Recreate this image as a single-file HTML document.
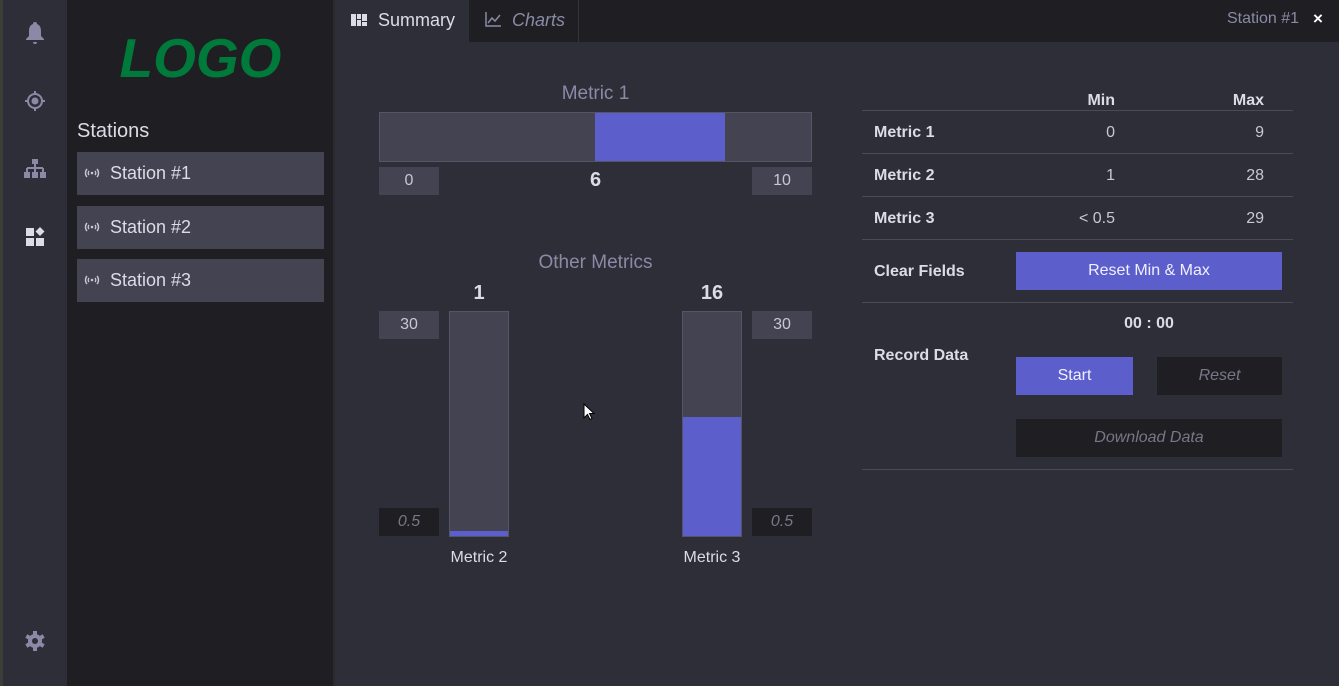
<!DOCTYPE html>
<html><head><style>
*{margin:0;padding:0;box-sizing:border-box}
body{width:1339px;height:686px;overflow:hidden;background:#2e2e38;font-family:"Liberation Sans",sans-serif;position:relative;color:#dcdce6}
.a{position:absolute}
.box{position:absolute;background:#434352;color:#c8c8d4;font-size:16px;text-align:center;line-height:28px}
.dk{background:#1f1f23;color:#777788;font-style:italic}
.st{position:absolute;left:77px;width:247px;height:43px;background:#434352;font-size:18px;color:#dcdce6;line-height:43px;padding-left:33px}
.st svg{position:absolute;left:6px;top:15px}
.line{position:absolute;left:862px;width:431px;height:1px;background:#4a4a58}
.lbl{position:absolute;left:874px;font-weight:bold;font-size:16px;color:#dcdce6}
.num{position:absolute;font-size:16px;color:#c8c8d4;text-align:right}
.btn{position:absolute;background:#5c5ecc;color:#f0f0ff;font-size:16px;text-align:center}
</style></head><body>
<div class="a" style="left:0;top:0;width:3px;height:686px;background:#3d3d38"></div>
<div class="a" style="left:3px;top:0;width:64px;height:686px;background:#2e2e38"></div>
<div class="a" style="left:67px;top:0;width:267px;height:686px;background:#1f1f23"></div>
<div class="a" style="left:333px;top:0;width:2px;height:686px;background:#2a2a30"></div>
<svg class="a" style="left:24px;top:21px" width="22" height="24" viewBox="0 0 22 24"><path d="M11 1a2 2 0 0 1 2 2c3 1 4 4 4 7v5l3 3v1H2v-1l3-3v-5c0-3 1-6 4-7a2 2 0 0 1 2-2zM9 21h4a2 2 0 0 1-4 0z" fill="#8a8aa6"/></svg>
<svg class="a" style="left:24px;top:90px" width="22" height="22" viewBox="0 0 22 22"><circle cx="11" cy="11" r="7" fill="none" stroke="#8a8aa6" stroke-width="2"/><circle cx="11" cy="11" r="3.5" fill="#8a8aa6"/><path d="M11 1v3M11 18v3M1 11h3M18 11h3" stroke="#8a8aa6" stroke-width="2"/></svg>
<svg class="a" style="left:24px;top:159px" width="22" height="20" viewBox="0 0 22 20"><rect x="8" y="0" width="6" height="5" fill="#8a8aa6"/><path d="M11 5v4M3 9h16M3 9v4M11 9v4M19 9v4" stroke="#8a8aa6" stroke-width="2" fill="none"/><rect x="0" y="13" width="6" height="6" fill="#8a8aa6"/><rect x="8" y="13" width="6" height="6" fill="#8a8aa6"/><rect x="16" y="13" width="6" height="6" fill="#8a8aa6"/></svg>
<svg class="a" style="left:25px;top:227px" width="20" height="20" viewBox="0 0 20 20"><rect x="1" y="1" width="8" height="8" fill="#dcdce6"/><rect x="1" y="11" width="8" height="8" fill="#dcdce6"/><rect x="11" y="11" width="8" height="8" fill="#dcdce6"/><path d="M15 0l4.5 4.5L15 9l-4.5-4.5z" fill="#dcdce6"/></svg>
<svg class="a" style="left:24px;top:630px" width="22" height="22" viewBox="0 0 22 22"><g fill="#8a8aa6"><circle cx="11" cy="11" r="7"/><rect x="9" y="1" width="4" height="20"/><rect x="9" y="1" width="4" height="20" transform="rotate(60 11 11)"/><rect x="9" y="1" width="4" height="20" transform="rotate(120 11 11)"/></g><circle cx="11" cy="11" r="3" fill="#2e2e38"/></svg>
<div class="a" style="left:67px;top:27px;width:267px;text-align:center;font-size:55px;font-weight:bold;font-style:italic;color:#007a3a;line-height:62px">LOGO</div>
<div class="a" style="left:77px;top:120px;font-size:20px;color:#dcdce6">Stations</div>
<div class="st" style="top:152px"><svg width="18" height="12" viewBox="0 0 18 12"><g fill="none" stroke="#c8c8d4" stroke-width="1.4"><path d="M4 2a6 6 0 0 0 0 8M14 2a6 6 0 0 1 0 8M6 4a3 3 0 0 0 0 4M12 4a3 3 0 0 1 0 4"/></g><circle cx="9" cy="6" r="1.3" fill="#c8c8d4"/></svg>Station #1</div>
<div class="st" style="top:206px"><svg width="18" height="12" viewBox="0 0 18 12"><g fill="none" stroke="#c8c8d4" stroke-width="1.4"><path d="M4 2a6 6 0 0 0 0 8M14 2a6 6 0 0 1 0 8M6 4a3 3 0 0 0 0 4M12 4a3 3 0 0 1 0 4"/></g><circle cx="9" cy="6" r="1.3" fill="#c8c8d4"/></svg>Station #2</div>
<div class="st" style="top:259px"><svg width="18" height="12" viewBox="0 0 18 12"><g fill="none" stroke="#c8c8d4" stroke-width="1.4"><path d="M4 2a6 6 0 0 0 0 8M14 2a6 6 0 0 1 0 8M6 4a3 3 0 0 0 0 4M12 4a3 3 0 0 1 0 4"/></g><circle cx="9" cy="6" r="1.3" fill="#c8c8d4"/></svg>Station #3</div>
<div class="a" style="left:335px;top:0;width:1004px;height:42px;background:#1f1f23"></div>
<div class="a" style="left:335px;top:0;width:134px;height:42px;background:#2e2e38"></div>
<div class="a" style="left:578px;top:0;width:1px;height:42px;background:#34343c"></div>
<svg class="a" style="left:351px;top:14px" width="16" height="12" viewBox="0 0 16 12"><g fill="#dcdce6"><rect x="0" y="0" width="5" height="12"/><rect x="6" y="0" width="4" height="5"/><rect x="6" y="6" width="4" height="6"/><rect x="11" y="0" width="5" height="7"/><rect x="11" y="8" width="5" height="4"/></g></svg>
<div class="a" style="left:378px;top:10px;font-size:18px;color:#dcdce6">Summary</div>
<svg class="a" style="left:485px;top:12px" width="16" height="15" viewBox="0 0 16 15"><path d="M1 0v14h15" stroke="#8a8aa6" stroke-width="1.5" fill="none"/><path d="M3 11l4-5 3 3 5-6" stroke="#8a8aa6" stroke-width="1.5" fill="none"/></svg>
<div class="a" style="left:512px;top:10px;font-size:18px;color:#8a8aa6;font-style:italic">Charts</div>
<div class="a" style="left:1227px;top:10px;font-size:16px;color:#8a8aa6">Station #1</div>
<div class="a" style="left:1313px;top:9px;font-size:17px;color:#fff;font-weight:bold">×</div>
<div class="a" style="left:379px;top:83px;width:433px;text-align:center;font-size:19px;color:#8a8aa6">Metric 1</div>
<div class="a" style="left:379px;top:112px;width:433px;height:50px;background:#434352;border:1px solid #555566"></div>
<div class="a" style="left:595px;top:113px;width:130px;height:48px;background:#5c5ecc"></div>
<div class="box" style="left:379px;top:167px;width:60px">0</div>
<div class="box" style="left:752px;top:167px;width:60px">10</div>
<div class="a" style="left:379px;top:169px;width:433px;text-align:center;font-size:20px;font-weight:bold;color:#dcdce6">6</div>
<div class="a" style="left:379px;top:252px;width:433px;text-align:center;font-size:19px;color:#8a8aa6">Other Metrics</div>
<div class="a" style="left:449px;top:282px;width:60px;text-align:center;font-size:20px;font-weight:bold">1</div>
<div class="a" style="left:682px;top:282px;width:60px;text-align:center;font-size:20px;font-weight:bold">16</div>
<div class="box" style="left:379px;top:311px;width:60px">30</div>
<div class="box dk" style="left:379px;top:508px;width:60px">0.5</div>
<div class="box" style="left:752px;top:311px;width:60px">30</div>
<div class="box dk" style="left:752px;top:508px;width:60px">0.5</div>
<div class="a" style="left:449px;top:311px;width:60px;height:226px;background:#434352;border:1px solid #555566"></div>
<div class="a" style="left:450px;top:531px;width:58px;height:5px;background:#5c5ecc"></div>
<div class="a" style="left:682px;top:311px;width:60px;height:226px;background:#434352;border:1px solid #555566"></div>
<div class="a" style="left:683px;top:417px;width:58px;height:119px;background:#5c5ecc"></div>
<div class="a" style="left:449px;top:549px;width:60px;text-align:center;font-size:16px">Metric 2</div>
<div class="a" style="left:682px;top:549px;width:60px;text-align:center;font-size:16px">Metric 3</div>
<svg class="a" style="left:583px;top:403px" width="12" height="18" viewBox="0 0 12 18"><path d="M1 1v14l3.5-3.5 2.5 5 2-1-2.5-5H11z" fill="#fff" stroke="#000" stroke-width="1"/></svg>
<div class="num" style="left:1000px;top:92px;width:115px;font-weight:bold;color:#dcdce6">Min</div>
<div class="num" style="left:1150px;top:92px;width:114px;font-weight:bold;color:#dcdce6">Max</div>
<div class="line" style="top:110px"></div>
<div class="lbl" style="top:124px">Metric 1</div><div class="num" style="left:1000px;top:124px;width:115px">0</div><div class="num" style="left:1150px;top:124px;width:114px">9</div>
<div class="line" style="top:153px"></div>
<div class="lbl" style="top:167px">Metric 2</div><div class="num" style="left:1000px;top:167px;width:115px">1</div><div class="num" style="left:1150px;top:167px;width:114px">28</div>
<div class="line" style="top:196px"></div>
<div class="lbl" style="top:210px">Metric 3</div><div class="num" style="left:1000px;top:210px;width:115px">&lt; 0.5</div><div class="num" style="left:1150px;top:210px;width:114px">29</div>
<div class="line" style="top:239px"></div>
<div class="lbl" style="top:263px">Clear Fields</div>
<div class="btn" style="left:1016px;top:252px;width:266px;height:38px;line-height:38px">Reset Min &amp; Max</div>
<div class="line" style="top:302px"></div>
<div class="a" style="left:1016px;top:315px;width:266px;text-align:center;font-weight:bold;font-size:16px">00 : 00</div>
<div class="lbl" style="top:347px">Record Data</div>
<div class="btn" style="left:1016px;top:357px;width:117px;height:38px;line-height:38px">Start</div>
<div class="btn" style="left:1157px;top:357px;width:125px;height:38px;line-height:38px;background:#1f1f23;color:#777788;font-style:italic">Reset</div>
<div class="btn" style="left:1016px;top:419px;width:266px;height:38px;line-height:38px;background:#1f1f23;color:#777788;font-style:italic">Download Data</div>
<div class="line" style="top:469px"></div>
</body></html>
